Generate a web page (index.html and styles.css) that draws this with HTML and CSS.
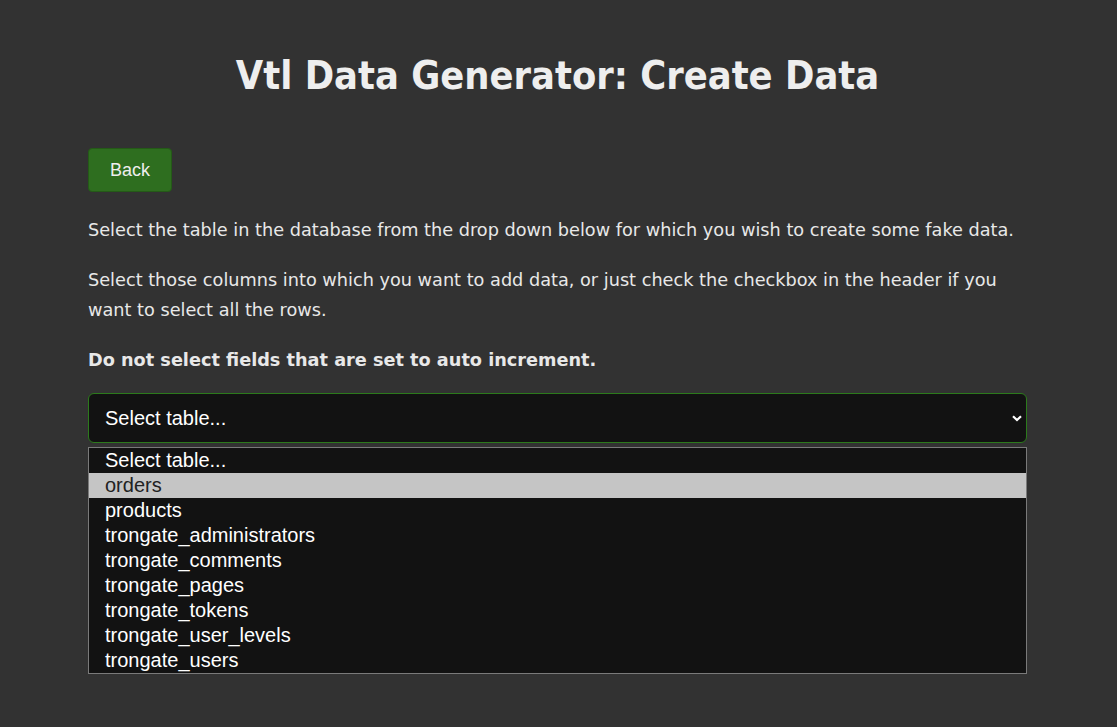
FILE: index.html
```html
<!DOCTYPE html>
<html lang="en">
<head>
<meta charset="utf-8">
<title>Vtl Data Generator: Create Data</title>
<link rel="stylesheet" href="styles.css">
</head>
<body>
<div class="page">
  <h1 class="title">Vtl Data Generator: Create Data</h1>
  <div class="actions"><button class="btn-back" type="button">Back</button></div>
  <p class="para">Select the table in the database from the drop down below for which you wish to create some fake data.</p>
  <p class="para">Select those columns into which you want to add data, or just check the checkbox in the header if you want to select all the rows.</p>
  <p class="para strong">Do not select fields that are set to auto increment.</p>
  <div class="select-wrap">
    <div class="select-box">
      <span class="select-value">Select table...</span>
      <svg class="chev" width="10" height="7" viewBox="0 0 10 7"><path d="M1 1.2 L5 5 L9 1.2" fill="none" stroke="#fff" stroke-width="2.2"/></svg>
    </div>
    <ul class="options">
      <li class="opt">Select table...</li>
      <li class="opt hl">orders</li>
      <li class="opt">products</li>
      <li class="opt">trongate_administrators</li>
      <li class="opt">trongate_comments</li>
      <li class="opt">trongate_pages</li>
      <li class="opt">trongate_tokens</li>
      <li class="opt">trongate_user_levels</li>
      <li class="opt">trongate_users</li>
    </ul>
  </div>
</div>
</body>
</html>
```
FILE: styles.css
```css
html, body {
  margin: 0;
  padding: 0;
  background: #323232;
}
body {
  color: #e8e8e8;
  font-family: "DejaVu Sans", sans-serif;
}
.page {
  width: 939px;
  margin: 0 auto;
  padding-top: 52px;
  box-sizing: border-box;
  position: relative;
  left: -1px;
}
.title {
  margin: 0 0 50px 0;
  text-align: center;
  font-family: "DejaVu Sans Condensed", "DejaVu Sans", sans-serif;
  font-size: 39.4px;
  line-height: 46px;
  font-weight: bold;
  color: #eeeeee;
}
.actions {
  display: flex;
  margin-bottom: 23px;
}
.btn-back {
  width: 84px;
  height: 44px;
  background: #2e6e1f;
  border: 1px solid #245a17;
  border-radius: 4px;
  color: #eeeeee;
  font-family: "Liberation Sans", Arial, sans-serif;
  font-size: 18px;
  padding: 0;
}
.para {
  margin: 0 0 20px 0;
  font-size: 17.7px;
  line-height: 30px;
}
.strong {
  font-weight: bold;
  margin-bottom: 18px;
}
.select-box {
  height: 50px;
  box-sizing: border-box;
  border: 1px solid #2c7a1c;
  border-radius: 6px;
  background: #121212;
  display: flex;
  align-items: center;
  justify-content: space-between;
  padding: 0 4px 0 16px;
  font-family: "Liberation Sans", Arial, sans-serif;
  font-size: 20px;
  color: #ffffff;
}
.options {
  list-style: none;
  margin: 4px 0 0 0;
  padding: 0;
  border: 1px solid #7a7a7a;
  background: #121212;
  font-family: "Liberation Sans", Arial, sans-serif;
  font-size: 20px;
  color: #ffffff;
}
.opt {
  height: 25px;
  line-height: 24px;
  padding-left: 16px;
}
.opt.hl {
  background: #c5c5c5;
  color: #222222;
}
```
